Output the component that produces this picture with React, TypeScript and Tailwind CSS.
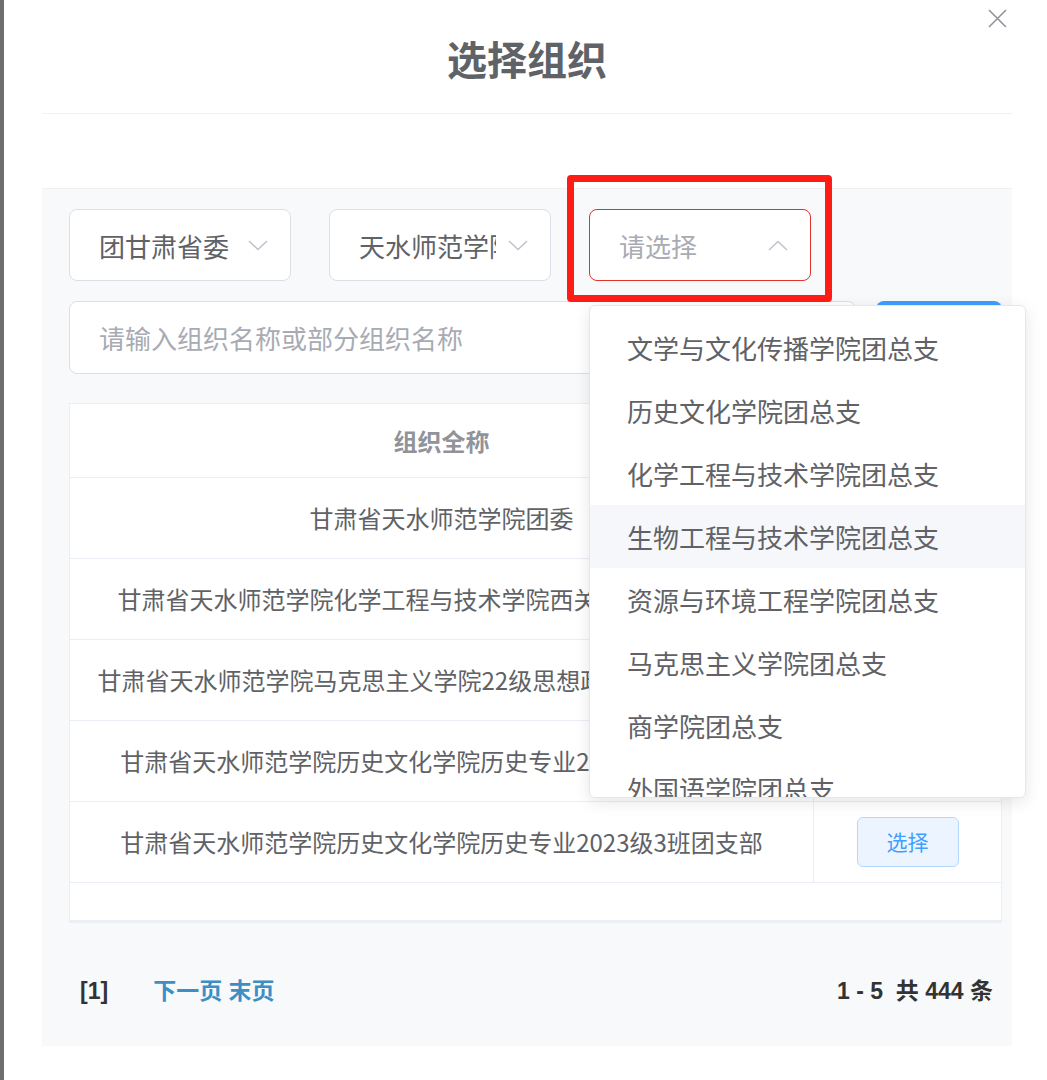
import React from 'react';

const selects = [
  { label: '团甘肃省委', active: false },
  { label: '天水师范学院', active: false },
  { label: '请选择', active: true },
];

const rows = [
  '甘肃省天水师范学院团委',
  '甘肃省天水师范学院化学工程与技术学院西关校区化学团支部',
  '甘肃省天水师范学院马克思主义学院22级思想政治教育1班团支部',
  '甘肃省天水师范学院历史文化学院历史专业2023级2班团支部',
  '甘肃省天水师范学院历史文化学院历史专业2023级3班团支部',
];

const options = [
  '文学与文化传播学院团总支',
  '历史文化学院团总支',
  '化学工程与技术学院团总支',
  '生物工程与技术学院团总支',
  '资源与环境工程学院团总支',
  '马克思主义学院团总支',
  '商学院团总支',
  '外国语学院团总支',
];

const Chevron = ({ up }: { up?: boolean }) => (
  <svg width="20" height="11" viewBox="0 0 20 11" fill="none" className="shrink-0">
    <polyline
      points={up ? '1,10 10,1.5 19,10' : '1,1 10,9.5 19,1'}
      stroke="#c0c4cc"
      strokeWidth="1.6"
      strokeLinejoin="round"
    />
  </svg>
);

export default function App() {
  return (
    <div className="relative flex w-[1047px] h-[1080px] overflow-hidden bg-white font-['Noto_Sans_CJK_SC',sans-serif]">
      {/* page edge behind the dialog */}
      <div className="w-[4px] shrink-0 bg-[#6e6e6e]" />

      <div className="ml-[38px] flex w-[970px] flex-col">
        {/* header */}
        <div className="h-[114px] border-b border-[#f0f1f3] pt-[34px] text-center">
          <h1 className="text-[40px] leading-[48px] font-bold text-[#5f6266]">选择组织</h1>
        </div>

        <div className="h-[74px]" />

        {/* body */}
        <div className="flex h-[858px] flex-col border-t border-[#eef0f3] bg-[#f8f9fb] pt-[20px] pl-[27px] pr-[10px]">
          {/* cascader selects */}
          <div className="flex gap-[38px]">
            {selects.map((s) => (
              <div
                key={s.label}
                className={
                  'flex h-[72px] w-[222px] items-center rounded-[8px] border bg-white pl-[29px] pr-[22px] ' +
                  (s.active ? 'border-[#e2322a]' : 'border-[#dcdfe6]')
                }
              >
                <span
                  className={
                    'w-[137px] overflow-hidden whitespace-nowrap text-[26px] ' +
                    (s.active ? 'text-[#a8abb2]' : 'text-[#606266]')
                  }
                >
                  {s.label}
                </span>
                <div className="ml-auto">
                  <Chevron up={s.active} />
                </div>
              </div>
            ))}
          </div>

          {/* search */}
          <div className="mt-[20px] flex h-[73px] gap-[20px]">
            <div className="flex flex-1 items-center rounded-[8px] border border-[#dcdfe6] bg-white pl-[29px] text-[26px] text-[#a8abb2]">
              请输入组织名称或部分组织名称
            </div>
            <button className="w-[126px] rounded-[8px] bg-[#409eff] text-[26px] text-white">查询</button>
          </div>

          {/* table */}
          <div className="mt-[29px] flex h-[520px] flex-col border border-b-[3px] border-[#ebeef5] bg-white">
            <div className="grid h-[74px] shrink-0 grid-cols-[743px_1fr] border-b border-[#ebeef5]">
              <div className="flex items-center justify-center text-[24px] font-bold text-[#909399]">组织全称</div>
              <div className="flex items-center justify-center text-[24px] font-bold text-[#909399]">操作</div>
            </div>
            {rows.map((r) => (
              <div key={r} className="grid h-[81px] shrink-0 grid-cols-[743px_1fr] border-b border-[#ebeef5]">
                <div className="flex items-center justify-center overflow-hidden whitespace-nowrap px-[20px] text-[24px] text-[#606266]">
                  {r}
                </div>
                <div className="flex items-center justify-center border-l border-[#ebeef5]">
                  <button className="h-[50px] w-[102px] rounded-[6px] border border-[#b3d8ff] bg-[#ecf5ff] text-[21px] text-[#409eff]">
                    选择
                  </button>
                </div>
              </div>
            ))}
            <div className="flex-1" />
          </div>

          {/* pagination */}
          <div className="mt-[46px] flex h-[44px] items-center pl-[11px] pr-[9px] font-['Liberation_Sans','Noto_Sans_CJK_SC',sans-serif] text-[23px] font-bold">
            <span className="text-[#333]">[1]</span>
            <span className="ml-[45px] text-[#3b8fc4]">下一页 末页</span>
            <span className="ml-auto whitespace-pre text-[#333]">1 - 5  共 444 条</span>
          </div>
        </div>
      </div>

      {/* close */}
      <svg className="absolute left-[988px] top-[9px]" width="19" height="19" viewBox="0 0 19 19">
        <path d="M1 1L18 18M18 1L1 18" stroke="#909399" strokeWidth="1.6" />
      </svg>

      {/* dropdown of the third select */}
      <div className="absolute left-[589px] top-[305px] h-[493px] w-[437px] overflow-hidden rounded-[6px] border border-[#e4e7ed] bg-white pt-[10px] shadow-[0_4px_16px_0_rgba(0,0,0,0.1)]">
        {options.map((o, i) => (
          <div
            key={o}
            className={
              'flex h-[63px] items-center whitespace-nowrap pl-[37px] text-[26px] text-[#606266] ' +
              (i === 3 ? 'bg-[#f5f7fa]' : '')
            }
          >
            {o}
          </div>
        ))}
      </div>

      {/* annotation */}
      <div className="absolute left-[567px] top-[175px] h-[127px] w-[265px] rounded-[4px] border-[7px] border-[#ff1c14]" />
    </div>
  );
}
